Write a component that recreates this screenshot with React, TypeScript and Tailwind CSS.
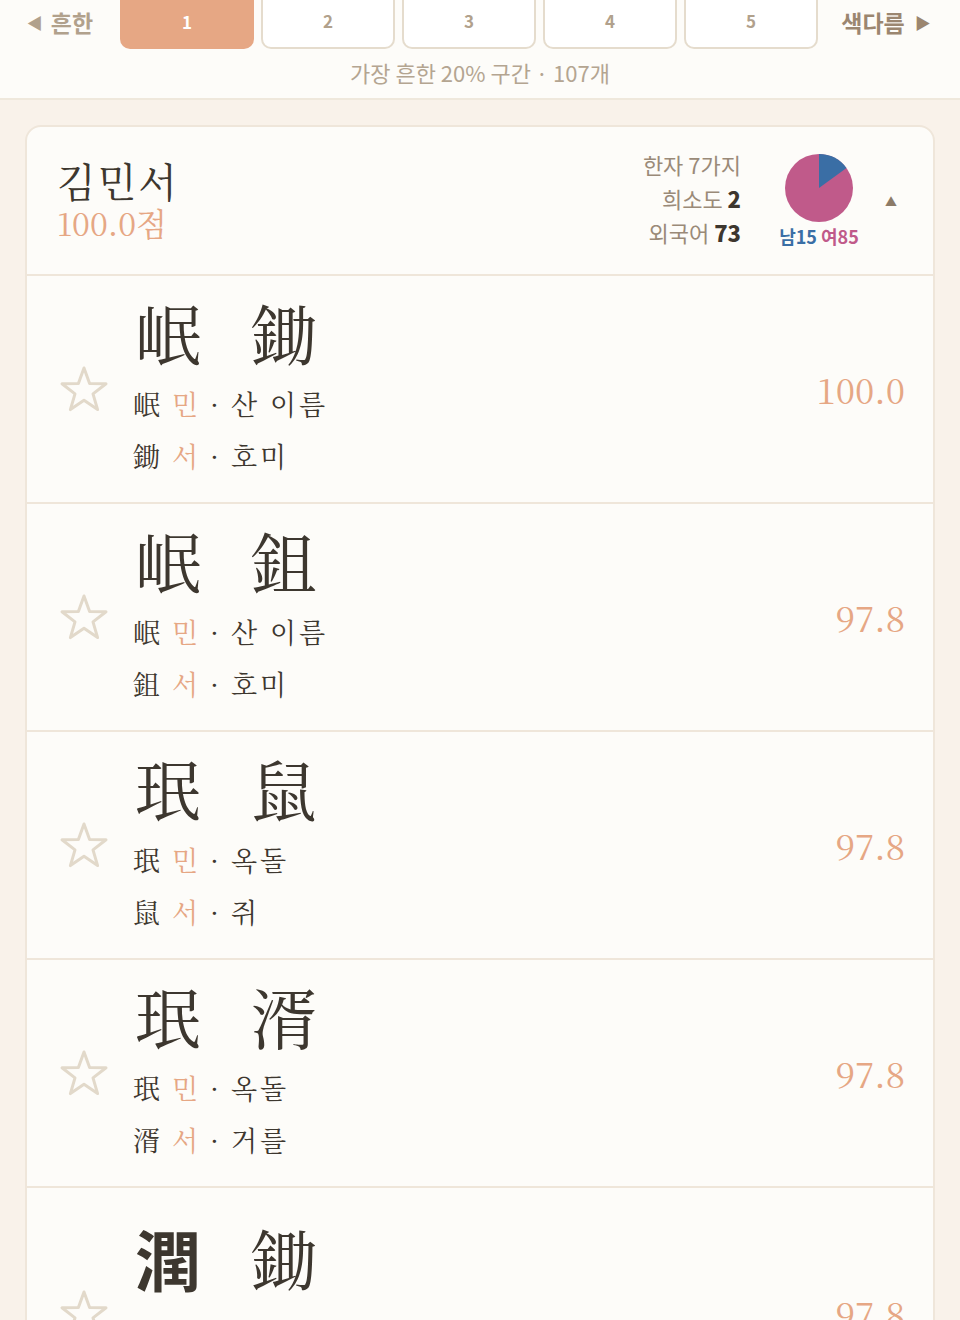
import React from "react";

const serif = { fontFamily: "'Noto Serif CJK KR', 'Noto Serif KR', 'Liberation Serif', serif" };
const sans = { fontFamily: "'Noto Sans CJK KR', 'Noto Sans', sans-serif" };

type Row = { h: [string, string]; a: [string, string]; score: string; last?: boolean };

const rows: Row[] = [
  { h: ["岷", "鋤"], a: ["산 이름", "호미"], score: "100.0" },
  { h: ["岷", "鉏"], a: ["산 이름", "호미"], score: "97.8" },
  { h: ["珉", "鼠"], a: ["옥돌", "쥐"], score: "97.8" },
  { h: ["珉", "湑"], a: ["옥돌", "거를"], score: "97.8" },
  { h: ["潤", "鋤"], a: ["윤택할", "호미"], score: "97.8", last: true },
];

function Star() {
  return (
    <svg width="50" height="48" viewBox="0 0 50 48" className="shrink-0">
      <polygon
        points="25,3 30.6,18.5 47,18.8 34,28.9 38.6,44.6 25,35.3 11.4,44.6 16,28.9 3,18.8 19.4,18.5"
        fill="none"
        stroke="#e2d9ca"
        strokeWidth="3"
        strokeLinejoin="round"
      />
    </svg>
  );
}

function Pie() {
  const r = 34;
  const cx = 35;
  const cy = 35;
  const ang = 0.15 * 2 * Math.PI;
  const x = cx + r * Math.sin(ang);
  const y = cy - r * Math.cos(ang);
  return (
    <svg width="70" height="70" viewBox="0 0 70 70">
      <circle cx={cx} cy={cy} r={r} fill="#c05a8a" />
      <path d={`M${cx},${cy} L${cx},${cy - r} A${r},${r} 0 0 1 ${x},${y} Z`} fill="#3a6ea5" />
    </svg>
  );
}

export default function App() {
  const syl = ["민", "서"];
  return (
    <div className="h-[1320px] overflow-hidden bg-[#f9f2ea]" style={sans}>
      <div className="bg-[#fdfcf9] border-b-2 border-[#efe8dc]">
        <div className="flex items-start h-[50px]">
          <div className="w-[120px] h-[44px] flex items-center justify-center gap-[8px] text-[23px] font-bold text-[#b1a18c]">
            <span className="text-[16px]">◀</span>
            <span>흔한</span>
          </div>
          <div className="flex gap-[7px]">
            {["1", "2", "3", "4", "5"].map((n, i) => (
              <div
                key={n}
                className={
                  i === 0
                    ? "w-[134px] h-[49px] rounded-b-[10px] bg-[#e6a784] text-white font-bold text-[17px] flex items-center justify-center"
                    : "w-[134px] h-[49px] rounded-b-[10px] bg-white border-2 border-t-0 border-[#e5dccd] text-[#b1a18c] font-bold text-[17px] flex items-center justify-center"
                }
              >
                <span className="-mt-[6px]">{n}</span>
              </div>
            ))}
          </div>
          <div className="flex-1 h-[44px] flex items-center justify-center gap-[10px] text-[23px] font-bold text-[#9b8670] -ml-[6px]">
            <span>색다름</span>
            <span className="text-[16px]">▶</span>
          </div>
        </div>
        <div className="text-center text-[22px] text-[#b4a591] h-[48px] leading-[44px]">가장 흔한 20% 구간 · 107개</div>
      </div>

      <div className="px-[25px] pt-[25px]">
        <div className="bg-[#fdfcf9] border-2 border-[#efe6da] rounded-[16px] overflow-hidden">
          <div className="h-[149px] flex items-center border-b-2 border-[#efe6da] pl-[30px] pr-[36px]">
            <div className="flex-1 -mt-[6px]">
              <div className="text-[40px] leading-[48px] text-[#3d372f] tracking-[2px]" style={serif}>김민서</div>
              <div className="text-[32px] leading-[36px] text-[#e6a784]" style={serif}>100.0점</div>
            </div>
            <div className="text-right text-[22px] leading-[34px] text-[#9a8a78] mr-[36px] -mt-[6px]">
              <div>한자 7가지</div>
              <div>
                희소도 <b className="text-[#3d362e] font-extrabold">2</b>
              </div>
              <div>
                외국어 <b className="text-[#3d362e] font-extrabold">73</b>
              </div>
            </div>
            <div className="flex flex-col items-center w-[84px] -mt-[2px]">
              <Pie />
              <div className="text-[18px] font-bold leading-[22px] mt-[2px]">
                <span className="text-[#3a6ea5]">남15</span> <span className="text-[#c05a8a]">여85</span>
              </div>
            </div>
            <div className="ml-[24px] text-[12px] text-[#8c7b68] mt-[2px]">▲</div>
          </div>

          {rows.map((r, i) =>
            r.last ? (
              <div key={i} className="h-[228px] flex items-start border-b-2 border-[#efe6da] pl-[32px] pr-[28px] pt-[31px]">
                <div className="mt-[70px]">
                  <Star />
                </div>
                <div className="ml-[26px] flex-1">
                  <div className="flex gap-[50px] text-[66px] leading-[76px] text-[#3d372f]" style={serif}>
                    <span className="font-bold" style={sans}>
                      {r.h[0]}
                    </span>
                    <span>{r.h[1]}</span>
                  </div>
                  <div className="mt-[28px] text-[27px] leading-[52px] text-[#3d372f]" style={serif}>
                    {[0, 1].map((k) => (
                      <div key={k} className="flex items-center -ml-[2px]">
                        <span>{r.h[k]}</span>
                        <span className="ml-[12px] text-[#e6a784]">{syl[k]}</span>
                        <span className="mx-[12px]">·</span>
                        <span className="tracking-[3px]">{r.a[k]}</span>
                      </div>
                    ))}
                  </div>
                </div>
                <div className="mt-[68px] text-[35px] text-[#e6a784]" style={serif}>{r.score}</div>
              </div>
            ) : (
              <div key={i} className="h-[228px] flex items-center border-b-2 border-[#efe6da] pl-[32px] pr-[28px]">
                <Star />
                <div className="ml-[26px] flex-1 -mt-[2px]">
                  <div className="flex gap-[50px] text-[66px] leading-[76px] text-[#3d372f]" style={serif}>
                    <span>{r.h[0]}</span>
                    <span>{r.h[1]}</span>
                  </div>
                  <div className="mt-[8px] text-[27px] leading-[52px] text-[#3d372f]" style={serif}>
                    {[0, 1].map((k) => (
                      <div key={k} className="flex items-center -ml-[2px]">
                        <span>{r.h[k]}</span>
                        <span className="ml-[12px] text-[#e6a784]">{syl[k]}</span>
                        <span className="mx-[12px]">·</span>
                        <span className="tracking-[3px]">{r.a[k]}</span>
                      </div>
                    ))}
                  </div>
                </div>
                <div className="text-[35px] text-[#e6a784]" style={serif}>{r.score}</div>
              </div>
            )
          )}
        </div>
      </div>
    </div>
  );
}
